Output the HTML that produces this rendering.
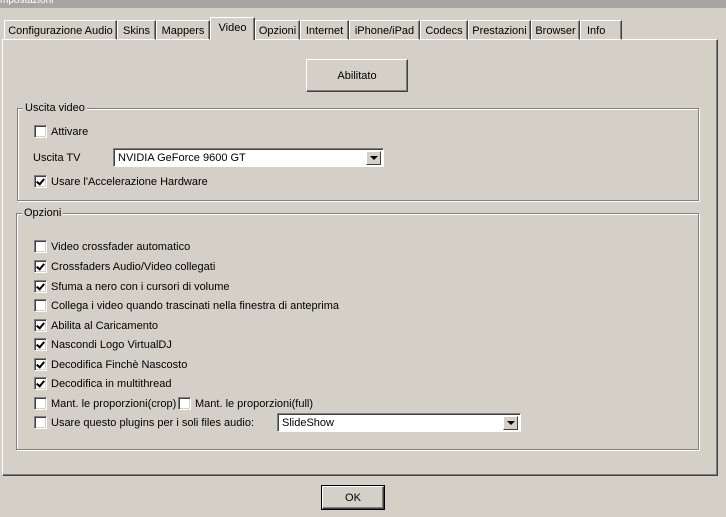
<!DOCTYPE html>
<html><head><meta charset="utf-8"><style>
*{margin:0;padding:0;box-sizing:border-box}
body{width:726px;height:517px;background:#d4d0c8;position:relative;overflow:hidden;font-family:"Liberation Sans",sans-serif;font-size:11px;color:#000}
.a{position:absolute}
.title{left:0;top:0;width:726px;height:8px;background:#a7a6a2;color:#fff;font-size:10px;line-height:2px;padding-left:0;overflow:hidden}
.tab{position:absolute;top:20px;height:20px;border:1px solid;border-color:#fff #404040 transparent #fff;box-shadow:inset -1px 0 #808080;text-align:center;line-height:20px;white-space:nowrap}
.tab.sel{top:17px;height:23px;background:#d4d0c8;z-index:2;border-bottom:none;line-height:20px}
.panel{left:2px;top:39px;width:716px;height:437px;border:1px solid;border-color:#fff #404040 #404040 #fff;box-shadow:inset -1px -1px #808080}
.grp{position:absolute;border:1px solid #808080;box-shadow:1px 1px #fff,inset 1px 1px #fff}
.leg{position:absolute;background:#d4d0c8;padding:0 2px;line-height:13px}
.cb{position:absolute;left:34px;width:13px;height:13px;background:#fff;border:1px solid;border-color:#808080 #fff #fff #808080;box-shadow:inset 1px 1px #404040,inset -1px -1px #d4d0c8}
.cb.c::after{content:"";position:absolute;left:3px;top:1px;width:3px;height:6px;border:solid #000;border-width:0 2px 2px 0;transform:rotate(40deg)}
.lbl{position:absolute;left:51px;line-height:14px;white-space:nowrap}
.btn{position:absolute;border:1px solid;border-color:#fff #404040 #404040 #fff;box-shadow:inset -1px -1px #808080;text-align:center}
.combo{position:absolute;background:#fff;border:1px solid;border-color:#808080 #fff #fff #808080;box-shadow:inset 1px 1px #404040;padding-left:4px;line-height:18px}
.arr{position:absolute;right:2px;top:2px;width:15px;height:14px;background:#d4d0c8;border:1px solid;border-color:#fff #404040 #404040 #fff}
.arr::after{content:"";position:absolute;left:3px;top:4px;border:4px solid transparent;border-top:4px solid #000;border-bottom:0}
</style></head><body>
<div class="a title">mpostazioni</div>
<div class="a panel"></div>
<div class="tab" style="left:4px;width:113px">Configurazione Audio</div>
<div class="tab" style="left:117px;width:39px">Skins</div>
<div class="tab" style="left:156px;width:54px">Mappers</div>
<div class="tab sel" style="left:210px;width:45px">Video</div>
<div class="tab" style="left:255px;width:45px">Opzioni</div>
<div class="tab" style="left:300px;width:49px">Internet</div>
<div class="tab" style="left:349px;width:71px">iPhone/iPad</div>
<div class="tab" style="left:420px;width:48px">Codecs</div>
<div class="tab" style="left:468px;width:63px">Prestazioni</div>
<div class="tab" style="left:531px;width:49px">Browser</div>
<div class="tab" style="left:580px;width:42px;text-align:left;padding-left:6px">Info</div>

<div class="btn" style="left:306px;top:59px;width:102px;height:33px;line-height:33px">Abilitato</div>

<div class="grp" style="left:17px;top:108px;width:682px;height:93px"></div>
<div class="leg" style="left:23px;top:102px">Uscita video</div>
<div class="cb" style="top:125px"></div><div class="lbl" style="top:125px">Attivare</div>
<div class="a" style="left:33px;top:152px">Uscita TV</div>
<div class="combo" style="left:113px;top:148px;width:271px;height:19px">NVIDIA GeForce 9600 GT<div class="arr"></div></div>
<div class="cb c" style="top:175px"></div><div class="lbl" style="top:175px">Usare l'Accelerazione Hardware</div>

<div class="grp" style="left:16px;top:213px;width:683px;height:237px"></div>
<div class="leg" style="left:22px;top:207px">Opzioni</div>
<div class="cb" style="top:240px"></div><div class="lbl" style="top:240px">Video crossfader automatico</div>
<div class="cb c" style="top:260px"></div><div class="lbl" style="top:260px">Crossfaders Audio/Video collegati</div>
<div class="cb c" style="top:280px"></div><div class="lbl" style="top:280px">Sfuma a nero con i cursori di volume</div>
<div class="cb" style="top:299px"></div><div class="lbl" style="top:299px">Collega i video quando trascinati nella finestra di anteprima</div>
<div class="cb c" style="top:319px"></div><div class="lbl" style="top:319px">Abilita al Caricamento</div>
<div class="cb c" style="top:338px"></div><div class="lbl" style="top:338px">Nascondi Logo VirtualDJ</div>
<div class="cb c" style="top:358px"></div><div class="lbl" style="top:358px">Decodifica Finchè Nascosto</div>
<div class="cb c" style="top:377px"></div><div class="lbl" style="top:377px">Decodifica in multithread</div>
<div class="cb" style="top:397px"></div><div class="lbl" style="top:397px">Mant. le proporzioni(crop)</div>
<div class="cb" style="top:397px;left:178px"></div><div class="lbl" style="top:397px;left:195px">Mant. le proporzioni(full)</div>
<div class="cb" style="top:416px"></div><div class="lbl" style="top:416px">Usare questo plugins per i soli files audio:</div>
<div class="combo" style="left:277px;top:413px;width:244px;height:19px">SlideShow<div class="arr"></div></div>

<div class="btn" style="left:322px;top:486px;width:62px;height:23px;line-height:23px;outline:1px solid #000">OK</div>
</body></html>
